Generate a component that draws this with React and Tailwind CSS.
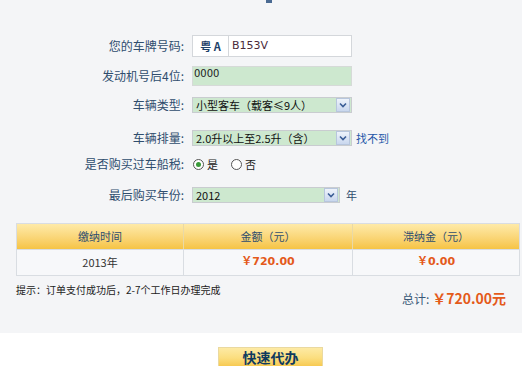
import React from 'react'

const cjk = { fontFamily: '"Noto Sans CJK SC", "DejaVu Sans", sans-serif' }
const latin = { fontFamily: '"DejaVu Sans", "Noto Sans CJK SC", sans-serif' }

function Label({ children }) {
  return (
    <div className="w-[186px] shrink-0 pr-[2px] text-right text-[12px] leading-none text-[#2f4d6e]" style={cjk}>
      {children}:
    </div>
  )
}

function Arrow() {
  return (
    <div className="flex h-[14px] w-[14px] items-center justify-center border border-[#b7c6dd] bg-gradient-to-b from-[#eef3fb] to-[#c9d7ee]">
      <svg width="8" height="6" viewBox="0 0 8 6">
        <path d="M1 1.5 L4 4.5 L7 1.5" fill="none" stroke="#3b5d96" strokeWidth="1.6" />
      </svg>
    </div>
  )
}

function Select({ value, width = 'w-[160px]' }) {
  return (
    <div className={`flex h-[16px] ${width} items-center justify-between border border-[#c9ccd0] bg-[#cde8cf] pl-[3px] pr-px`}>
      <span className="text-[11px] leading-none text-[#111]" style={cjk}>{value}</span>
      <Arrow />
    </div>
  )
}

function Radio({ checked, label }) {
  return (
    <div className="flex items-center gap-[3px]">
      <div className="flex h-[11px] w-[11px] items-center justify-center rounded-full border border-[#555] bg-white">
        {checked && <div className="h-[5px] w-[5px] rounded-full bg-[#3a9a3a]" />}
      </div>
      <span className="text-[11px] leading-none text-[#222]" style={cjk}>{label}</span>
    </div>
  )
}

export default function App() {
  return (
    <div className="w-[522px] h-[366px] overflow-hidden bg-white">
      {/* 表单区域 */}
      <div className="h-[333px] bg-[#f4f5f7]">
        <div className="ml-[266px] h-[3px] w-[6px] bg-[#4a6a92]" />

        <div className="mt-[32px] flex h-[22px] items-center gap-[6px]">
          <Label>您的车牌号码</Label>
          <div className="flex h-[22px] w-[160px] items-center border border-[#d4d7db] bg-white">
            <div className="flex h-full w-[36px] items-center justify-center border-r border-[#d4d7db] text-[11px] font-bold text-[#1d3f68]" style={cjk}>
              粤&nbsp;A
            </div>
            <span className="pl-[3px] text-[11px] text-[#4a2a3a]" style={latin}>B153V</span>
          </div>
        </div>

        <div className="mt-[9px] flex h-[20px] items-center gap-[6px]">
          <Label>发动机号后4位</Label>
          <div className="h-[20px] w-[160px] border border-[#d6dad8] bg-[#cde8cf] pl-[1px] pt-[2px]">
            <div className="text-[10px] leading-none text-[#222]" style={latin}>0000</div>
          </div>
        </div>

        <div className="mt-[11px] flex h-[16px] items-center gap-[6px]">
          <Label>车辆类型</Label>
          <Select value="小型客车（载客≤9人）" />
        </div>

        <div className="mt-[17px] flex h-[16px] items-center gap-[6px]">
          <Label>车辆排量</Label>
          <Select value="2.0升以上至2.5升（含）" />
          <span className="-ml-[2px] text-[11px] text-[#2556a8]" style={cjk}>找不到</span>
        </div>

        <div className="mt-[10px] flex h-[16px] items-center gap-[6px]">
          <Label>是否购买过车船税</Label>
          <div className="flex items-center gap-[13px] pl-[1px]">
            <Radio checked label="是" />
            <Radio label="否" />
          </div>
        </div>

        <div className="mt-[15px] flex h-[16px] items-center gap-[6px]">
          <Label>最后购买年份</Label>
          <Select value="2012" width="w-[148px]" />
          <span className="text-[11px] text-[#2f4d6e]" style={cjk}>年</span>
        </div>

        {/* 缴费表格 */}
        <div className="ml-[16px] mt-[20px] w-[504px] border border-[#d9dde2]">
          <div className="grid h-[25px] grid-cols-[167px_169px_1fr] bg-gradient-to-b from-[#feeaa8] to-[#f6c443] text-[11px] text-[#2f4d6e]" style={cjk}>
            <div className="flex items-center justify-center border-r border-[#e9d9a6]">缴纳时间</div>
            <div className="flex items-center justify-center border-r border-[#e9d9a6]">金额（元）</div>
            <div className="flex items-center justify-center">滞纳金（元）</div>
          </div>
          <div className="grid h-[26px] grid-cols-[167px_169px_1fr] border-t border-[#d9dde2] bg-[#f7f8fa] text-[11px]">
            <div className="flex items-center justify-center border-r border-[#d9dde2] text-[#333]" style={cjk}>2013年</div>
            <div className="flex items-center justify-center border-r border-[#d9dde2] font-bold text-[#e45a1b]" style={latin}>￥720.00</div>
            <div className="flex items-center justify-center font-bold text-[#e45a1b]" style={latin}>￥0.00</div>
          </div>
        </div>

        <div className="ml-[16px] mr-[16px] mt-[9px] flex items-start justify-between">
          <span className="text-[10px] leading-none text-[#222]" style={cjk}>提示：订单支付成功后，2-7个工作日办理完成</span>
          <div className="mt-[3px] flex items-center">
            <span className="text-[12px] text-[#3a5878]" style={cjk}>总计:&nbsp;</span>
            <span className="text-[14px] font-bold text-[#e45a1b]" style={cjk}>￥720.00元</span>
          </div>
        </div>
      </div>

      {/* 提交按钮 */}
      <div className="flex justify-center pt-[14px] pl-[19px]">
        <button className="flex h-[22px] w-[105px] items-start justify-center border border-[#ead9a0] bg-gradient-to-b from-[#fdeaa4] via-[#fbde7e] to-[#f6c443] text-[14px] font-bold leading-[18px] text-[#0f3b5e]" style={cjk}>
          快速代办
        </button>
      </div>
    </div>
  )
}
